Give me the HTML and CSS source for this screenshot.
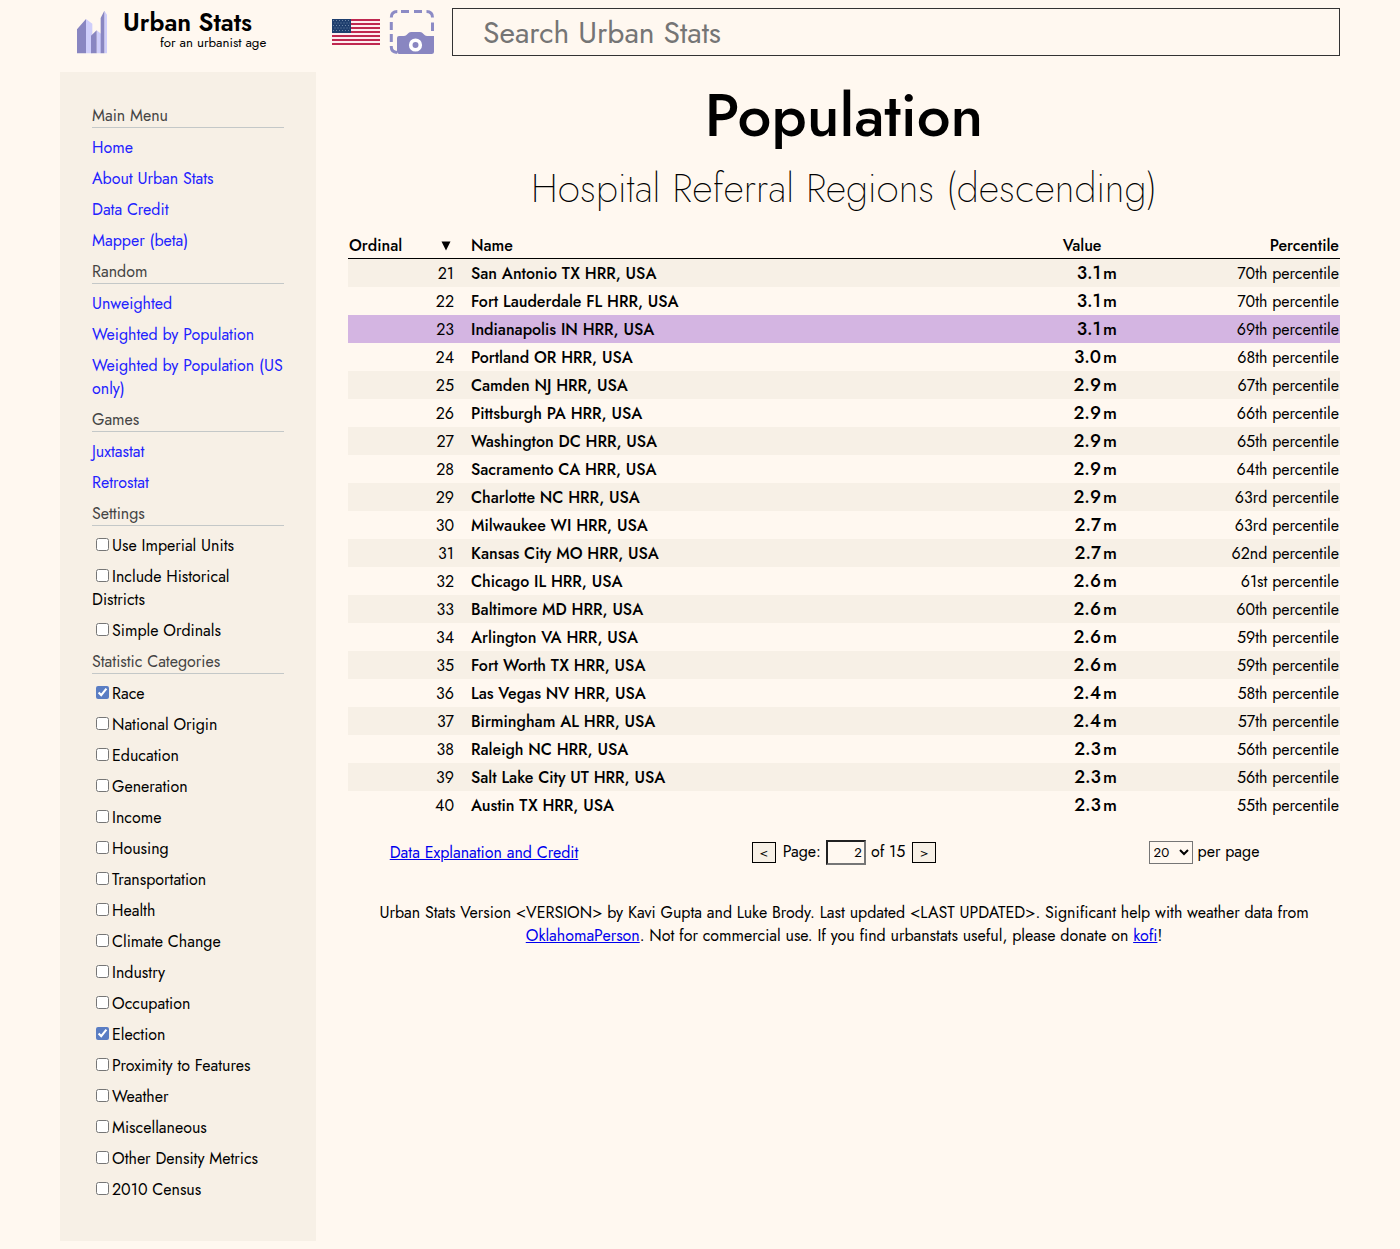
FILE: index.html
```html
<!DOCTYPE html>
<html lang="en">
<head>
<meta charset="utf-8">
<title>Population - Urban Stats</title>
<link rel="stylesheet" href="styles.css">
</head>
<body>
<div class="page">
<header class="header">
  <a class="brand">
    <svg class="brand-mark" viewBox="48 24 96 138" width="32" height="46">
      <path fill="#cfcefa" d="M78 57L97 71V160H78zM110 91L123 101V160H110zM133 32L141 44V160H133z"/>
      <path fill="#8986c1" d="M51 88L78 57V160H51zM93 107L110 91V160H93zM122 54L133 32V160H122z"/>
    </svg>
    <span class="brand-text"><span class="brand-name">Urban Stats</span><span class="brand-tag">for an urbanist age</span></span>
  </a>
  <svg class="flag" viewBox="0 0 48 26" width="48" height="26">
    <path fill="#fdeef0" d="M0 0H48V26H0z"/>
    <path stroke="#bf2850" stroke-width="2" d="M0 1H48M0 5H48M0 9H48M0 13H48M0 17H48M0 21H48M0 25H48"/>
    <path fill="#1f3f6e" d="M0 0H19V14H0z"/>
    <path stroke="#6f88a8" stroke-width="1" stroke-dasharray="1 2" d="M1 1.5H18M2.5 4H18M1 6.5H18M2.5 9H18M1 11.5H18"/>
  </svg>
  <svg class="camera" viewBox="0 0 46 46" width="46" height="46">
    <path fill="none" stroke="#8c8bc5" stroke-width="3" d="M2.300 9.500Q2.300 3.500 8.300 3.500M12 3.500H20M25 3.500H33M37.500 3.500Q43.500 3.500 43.500 9.500M43.500 14.500V23M2.300 14V22M2.300 26V34M2.300 38V39Q2.300 44 8 44.500"/>
    <path fill="#8986c1" d="M10 28H15Q17 28 18.500 26Q20 24 22 24H31Q33 24 34.500 26Q36 28 38 28H45V43.500Q45 46 42.500 46H10.500Q8 46 8 43.500V30Q8 28 10 28z"/>
    <circle cx="26.500" cy="37" r="4.800" fill="none" stroke="#fff" stroke-width="3.600"/>
  </svg>
  <input class="search" type="text" placeholder="Search Urban Stats">
</header>
<div class="columns">
<nav class="sidebar">
  <h3>Main Menu</h3>
  <a>Home</a>
  <a>About Urban Stats</a>
  <a>Data Credit</a>
  <a>Mapper (beta)</a>
  <h3>Random</h3>
  <a>Unweighted</a>
  <a>Weighted by Population</a>
  <a>Weighted by Population (US only)</a>
  <h3>Games</h3>
  <a>Juxtastat</a>
  <a>Retrostat</a>
  <h3>Settings</h3>
  <label><input type="checkbox">Use Imperial Units</label>
  <label><input type="checkbox">Include Historical Districts</label>
  <label><input type="checkbox">Simple Ordinals</label>
  <h3>Statistic Categories</h3>
  <label><input type="checkbox" checked>Race</label>
  <label><input type="checkbox">National Origin</label>
  <label><input type="checkbox">Education</label>
  <label><input type="checkbox">Generation</label>
  <label><input type="checkbox">Income</label>
  <label><input type="checkbox">Housing</label>
  <label><input type="checkbox">Transportation</label>
  <label><input type="checkbox">Health</label>
  <label><input type="checkbox">Climate Change</label>
  <label><input type="checkbox">Industry</label>
  <label><input type="checkbox">Occupation</label>
  <label><input type="checkbox" checked>Election</label>
  <label><input type="checkbox">Proximity to Features</label>
  <label><input type="checkbox">Weather</label>
  <label><input type="checkbox">Miscellaneous</label>
  <label><input type="checkbox">Other Density Metrics</label>
  <label><input type="checkbox">2010 Census</label>
</nav>
<main class="content">
  <h1>Population</h1>
  <h2>Hospital Referral Regions (descending)</h2>
  <div class="table">
    <div class="row head"><span class="ord"><span>Ordinal</span><svg width="10" height="10" viewBox="0 0 10 10"><path d="M.5 .5H9.500L5 9.500z"/></svg></span><span class="name">Name</span><span class="val">Value</span><span class="pct">Percentile</span></div>
    <div class="row"><span class="ord">21</span><span class="name">San Antonio TX HRR, USA</span><span class="val">3.1</span><span class="unit">m</span><span class="pct">70th percentile</span></div>
    <div class="row"><span class="ord">22</span><span class="name">Fort Lauderdale FL HRR, USA</span><span class="val">3.1</span><span class="unit">m</span><span class="pct">70th percentile</span></div>
    <div class="row current"><span class="ord">23</span><span class="name">Indianapolis IN HRR, USA</span><span class="val">3.1</span><span class="unit">m</span><span class="pct">69th percentile</span></div>
    <div class="row"><span class="ord">24</span><span class="name">Portland OR HRR, USA</span><span class="val">3.0</span><span class="unit">m</span><span class="pct">68th percentile</span></div>
    <div class="row"><span class="ord">25</span><span class="name">Camden NJ HRR, USA</span><span class="val">2.9</span><span class="unit">m</span><span class="pct">67th percentile</span></div>
    <div class="row"><span class="ord">26</span><span class="name">Pittsburgh PA HRR, USA</span><span class="val">2.9</span><span class="unit">m</span><span class="pct">66th percentile</span></div>
    <div class="row"><span class="ord">27</span><span class="name">Washington DC HRR, USA</span><span class="val">2.9</span><span class="unit">m</span><span class="pct">65th percentile</span></div>
    <div class="row"><span class="ord">28</span><span class="name">Sacramento CA HRR, USA</span><span class="val">2.9</span><span class="unit">m</span><span class="pct">64th percentile</span></div>
    <div class="row"><span class="ord">29</span><span class="name">Charlotte NC HRR, USA</span><span class="val">2.9</span><span class="unit">m</span><span class="pct">63rd percentile</span></div>
    <div class="row"><span class="ord">30</span><span class="name">Milwaukee WI HRR, USA</span><span class="val">2.7</span><span class="unit">m</span><span class="pct">63rd percentile</span></div>
    <div class="row"><span class="ord">31</span><span class="name">Kansas City MO HRR, USA</span><span class="val">2.7</span><span class="unit">m</span><span class="pct">62nd percentile</span></div>
    <div class="row"><span class="ord">32</span><span class="name">Chicago IL HRR, USA</span><span class="val">2.6</span><span class="unit">m</span><span class="pct">61st percentile</span></div>
    <div class="row"><span class="ord">33</span><span class="name">Baltimore MD HRR, USA</span><span class="val">2.6</span><span class="unit">m</span><span class="pct">60th percentile</span></div>
    <div class="row"><span class="ord">34</span><span class="name">Arlington VA HRR, USA</span><span class="val">2.6</span><span class="unit">m</span><span class="pct">59th percentile</span></div>
    <div class="row"><span class="ord">35</span><span class="name">Fort Worth TX HRR, USA</span><span class="val">2.6</span><span class="unit">m</span><span class="pct">59th percentile</span></div>
    <div class="row"><span class="ord">36</span><span class="name">Las Vegas NV HRR, USA</span><span class="val">2.4</span><span class="unit">m</span><span class="pct">58th percentile</span></div>
    <div class="row"><span class="ord">37</span><span class="name">Birmingham AL HRR, USA</span><span class="val">2.4</span><span class="unit">m</span><span class="pct">57th percentile</span></div>
    <div class="row"><span class="ord">38</span><span class="name">Raleigh NC HRR, USA</span><span class="val">2.3</span><span class="unit">m</span><span class="pct">56th percentile</span></div>
    <div class="row"><span class="ord">39</span><span class="name">Salt Lake City UT HRR, USA</span><span class="val">2.3</span><span class="unit">m</span><span class="pct">56th percentile</span></div>
    <div class="row"><span class="ord">40</span><span class="name">Austin TX HRR, USA</span><span class="val">2.3</span><span class="unit">m</span><span class="pct">55th percentile</span></div>
  </div>
  <div class="pager">
    <div class="explain"><a href="#">Data Explanation and Credit</a></div>
    <div class="pages"><button>&lt;</button><span class="page-label">Page:</span><input type="text" value="2"><span class="page-count">of 15</span><button>&gt;</button></div>
    <div class="size"><select><option>20</option></select><span>per page</span></div>
  </div>
  <footer class="credits">
    <div class="credit-1">Urban Stats Version &lt;VERSION&gt; by Kavi Gupta and Luke Brody. Last updated &lt;LAST UPDATED&gt;. Significant help with weather data from</div>
    <div class="credit-2"><a href="#">OklahomaPerson</a>. Not for commercial use. If you find urbanstats useful, please donate on <a href="#">kofi</a>!</div>
  </footer>
</main>
</div>
</div>
</body>
</html>
```
FILE: styles.css
```css
* { box-sizing: border-box; }
body {
  margin: 0;
  background: #fff8f0;
  color: #000;
  font: 16px/23px Jost, Lato, sans-serif;
}
.page { width: 1280px; margin: 0 auto; }
.header { display: flex; height: 72px; padding-top: 8px; align-items: flex-start; }
.brand { display: flex; width: 272px; padding-left: 16px; }
.brand-text { display: flex; flex-direction: column; padding: 1px 0 0 15px; }
.brand-name { font-size: 24.8px; font-weight: 600; line-height: 27px; white-space: nowrap; }
.brand-tag { font-size: 13.3px; line-height: 14px; padding-left: 37px; white-space: nowrap; }
.flag { margin-top: 11px; }
.camera { margin: 0 17px 0 9px; }
.search {
  flex: 1;
  height: 48px;
  margin: 0;
  padding: 0 30px;
  border: 1px solid #333;
  border-radius: 0;
  background: #fff8f0;
  font: 30px Jost, Lato, sans-serif;
}
.search::placeholder { color: #757575; }
.columns { display: flex; align-items: flex-start; }
.sidebar {
  display: flex;
  flex-direction: column;
  gap: 8px;
  width: 256px;
  padding: 32px 32px 40px;
  background: #f7f0e6;
}
.sidebar h3 { margin: 0; font-size: 16px; font-weight: 400; color: #444; border-bottom: 1px solid #c4c8c8; }
.sidebar a { color: #2222ff; }
.sidebar input { margin: 3px 3px 3px 4px; accent-color: #5a7dc3; }
.content { width: 992px; margin-left: 32px; }
h1 { margin: 0; font-size: 60px; font-weight: 500; line-height: 87px; text-align: center; }
h2 { margin: 0; font-size: 40px; font-weight: 200; line-height: 58px; text-align: center; white-space: nowrap; }
.table { margin-top: 15px; }
.row { display: flex; height: 28px; padding: 0 1px; line-height: 29px; white-space: nowrap; }
.row:nth-child(even) { background: #f7f0e6; }
.row.current { background: #d4b5e2; }
.head { height: 27px; line-height: 27px; border-bottom: 1px solid #000; font-weight: 500; }
.ord { width: 105px; text-align: right; }
.head .ord { display: flex; justify-content: space-between; align-items: center; padding-right: 3px; }
.head svg { margin-top: 2px; }
.name { width: 538px; padding-left: 17px; font-weight: 500; }
.val { width: 110px; padding-right: 1px; text-align: right; font-size: 18px; line-height: 28px; font-weight: 500; }
.head .val { padding-right: 0.5px; font-size: 16px; line-height: 27px; }
.unit { width: 16px; padding-left: 1px; font-size: 17.5px; line-height: 28px; font-weight: 500; }
.pct { flex: 1; text-align: right; }
.pager { display: grid; grid-template-columns: 272px 448px 272px; height: 24px; margin-top: 21px; }
.explain, .size { display: flex; justify-content: center; }
.explain { padding-top: 1px; }
.pages { display: flex; justify-content: center; align-items: center; }
.pages button { width: 24px; height: 21px; padding: 0; border: 1px solid #000; background: #f7f0e6; font: 13.3px Jost, Lato, sans-serif; }
.pages input { width: 40px; height: 25px; margin: 0 5px; padding: 1px 2px; border: 2px inset #767676; background: #fff8f0; text-align: right; font: 13.3px Jost, Lato, sans-serif; }
.pages span { padding-bottom: 2px; }
.page-label { margin-left: 7px; }
.page-count { margin-right: 7px; }
.size select { width: 44px; height: 23px; margin: 1px 5px 0 0; border: 1px solid #767676; border-radius: 0; background: #fff8f0; font: 13.3px Jost, Lato, sans-serif; }
a[href] { color: #0000ee; }
.credits { margin-top: 37px; text-align: center; white-space: nowrap; }
```
